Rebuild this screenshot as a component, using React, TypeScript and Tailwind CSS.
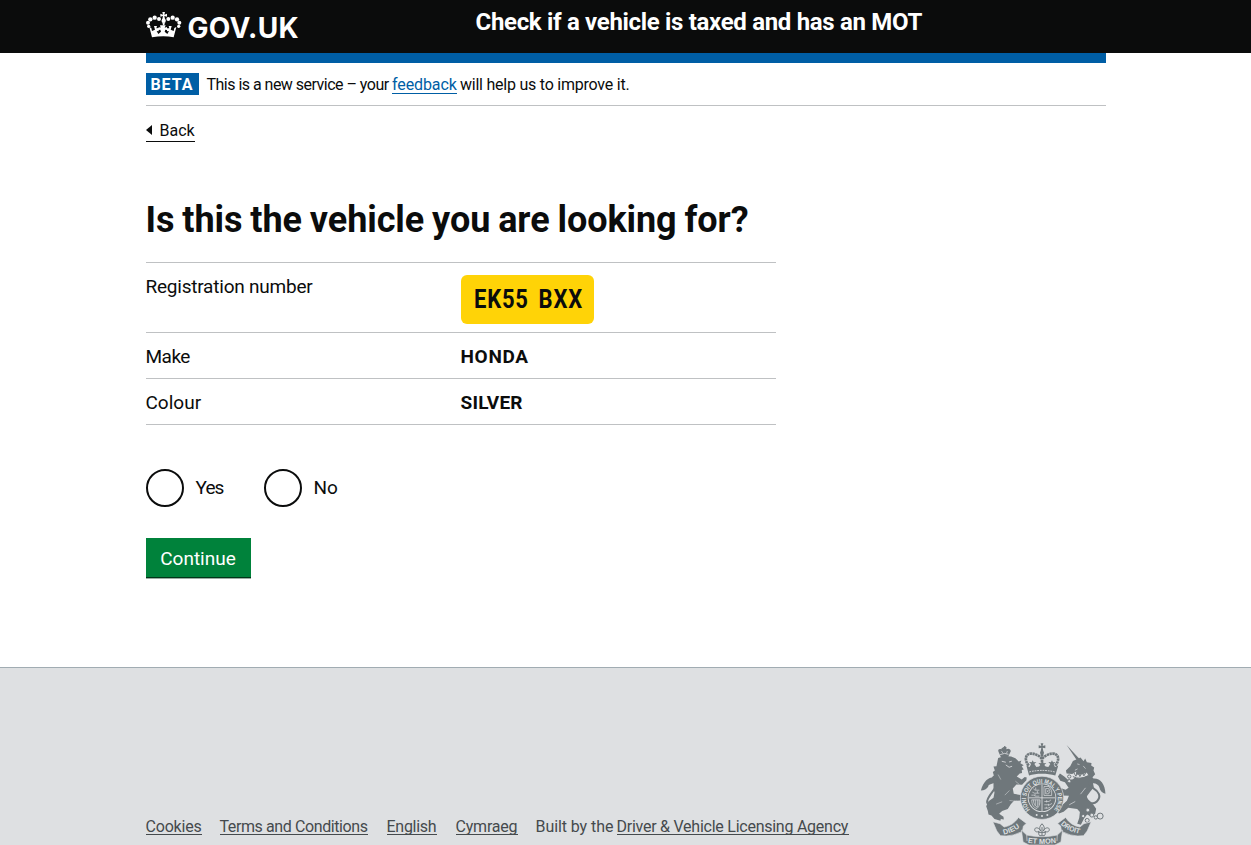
import type { ReactNode } from "react";

function Crown() {
  return (
    <svg viewBox="0 0 126 102" className="h-[34px] w-[42px] shrink-0 fill-white" aria-hidden="true">
      <path d="M55 12h8l-2 8 8-3v9l-8-2 3 14h-10l3-14-8 2v-9l8 3z" />
      <circle cx="59" cy="38" r="6.5" />
      <circle cx="45" cy="33" r="6" />
      <circle cx="73" cy="33" r="6" />
      <circle cx="32" cy="29" r="6.5" />
      <circle cx="86" cy="29" r="6.5" />
      <circle cx="19" cy="34" r="6.5" />
      <circle cx="99" cy="34" r="6.5" />
      <circle cx="12" cy="44" r="6" />
      <circle cx="106" cy="44" r="6" />
      <circle cx="14" cy="55" r="5" />
      <circle cx="104" cy="55" r="5" />
      <path d="M16 57l6 3 2 9 9-4-3-11h9l-2 7 7-1v10l-6-1 5 9 8-7-2-6-5 1v-9l6 2-2-7h17l-3 7 7-2v9l-5-1-2 6 8 7 5-9-6 1V60l7 1-2-7h9l-3 11 9 4 2-9 6-3-8 31Q59 81 24 88z" />
      <path d="M55 43h8l-2 9h-4z" />
    </svg>
  );
}

function Lion() {
  return (
    <g>
      <path d="M85 49c-3-7 3-10 9-7-1-5 5-6 7-3 2-4 9-2 8 3 6-4 13 0 13 6l-8 17H92z" />
      <path d="M104 32v11M99 37h10" className="fill-none stroke-[#6f777b]" strokeWidth="4" />
      <path d="M90 58q14-7 25-1" className="fill-none stroke-[#dee0e2]" strokeWidth="2.5" />
      <path d="M94 47l4 6m14-6l-3 7" className="stroke-[#dee0e2]" strokeWidth="2" />
      <path d="M84 68l20-6 19 2 13 5 10 10 8-3-3 8 10 6-6 3 6 10-6 1 1 9-7 2-9 9 15 9 9-8 6 2-1 8-13 14-17-1-11 12 3 16 24 4 8-3 5 7-3 10-13 2-20 1-10 10-9 15-17 6-9 8 13 9 1 8-9-1-1 5-18-5-9-11-9-3-2-10-5-15 7-15 15-10 3-16-3-13 0-18-6-5 6-4-5-6 6-5-3-11 6-4-4-12 9-1z" />
      <path d="M94 173C77 197 55 216 51 203c-5-18 37-50 33-66-3-14-23-6-29 6" className="fill-none stroke-[#6f777b]" strokeWidth="6" />
      <path d="M82 130c-14-10-40-2-50 36 11 0 17-4 22-11 0-11 15-7 28-17z" />
      <path d="M95 78l12 3m10-1l8-2M107 89l10 7 9-3" className="fill-none stroke-[#dee0e2]" strokeWidth="2.5" />
      <path d="M84 118l8 15m44 5l12 10M78 207l18-7M104 180l14-14M118 196l16 2" className="fill-none stroke-[#dee0e2]" strokeWidth="1.5" />
    </g>
  );
}

function Unicorn() {
  return (
    <g>
      <path d="M290 29l48 52-9 6z" />
      <path d="M332 67l9 11 5-8 5 11 14 2-1 8 9 6-2 9 5 11-8 9 5 8-4 8 3 14-11 14-10 13 3 14 16 11 9 13-3 15-13 8-11-6-8 9-6 12-5 10-11-3 6-17 2-18-8-9-27-4-14 12-14 5-7-10 13-12 18-16 6-15-20-1-16-13-2-13 15 4 13 5 9-6-11-17-14-4-7-13 6-9 13 9 12 10 14-2 8-7 2-16-12 7-17-1-2-9 13-13 8-16z" />
      <path d="M344 181c7 16 23 32 37 18 16-16 4-31-12-41-15-9-12-24 3-24" className="fill-none stroke-[#6f777b]" strokeWidth="6" />
      <path d="M366 131c22-5 40 13 41 45-9-2-16-8-18-18-3-12-15-16-25-13z" />
      <path d="M309 119q19 11 44-3" className="fill-none stroke-[#dee0e2]" strokeWidth="10" />
      <path d="M309 124q21 11 45-2M311 111l7 12 6-12 6 13 7-14 5 12 8-13" className="fill-none stroke-[#6f777b]" strokeWidth="3" />
      <g className="fill-[#dee0e2] stroke-[#6f777b]" strokeWidth="3">
        <circle cx="298" cy="124" r="5" />
        <circle cx="298" cy="138" r="5" />
        <circle cx="354" cy="225" r="6" />
        <circle cx="340" cy="243" r="5" />
        <circle cx="352" cy="256" r="6" />
        <circle cx="366" cy="240" r="6" />
        <circle cx="378" cy="247" r="5" />
        <circle cx="391" cy="243" r="9" />
      </g>
      <path d="M322 86l7 2M315 105l8-4M340 92l7 8M347 158l-15 19M316 199l-18 10" className="fill-none stroke-[#dee0e2]" strokeWidth="2" />
    </g>
  );
}

function RoyalCrown() {
  return (
    <g>
      <path d="M212 24h8l-2 8 8-2v9l-8-2 2 11h-8l2-11-8 2v-9l8 2z" />
      <circle cx="216" cy="52" r="6" />
      <path d="M176 91c-15-18-9-37 8-36 13 0 25 8 32 15 7-7 19-15 32-15 17-1 23 18 8 36" className="fill-none stroke-[#6f777b]" strokeWidth="8" strokeDasharray="7 1.5" />
      <path d="M216 56v35" className="stroke-[#6f777b]" strokeWidth="8" strokeDasharray="7 1.5" />
      <path d="M169 91l10 4 4-9-6-6 8 1 3-6 3 6 8-1-6 6 6 9 8-1 4-5-6-6 8 1 4-7 4 7 8-1-6 6 4 5 8 1 6-9-6-6 8 1 3-6 3 6 8-1-6 6 4 9 10-4-9 30c-24-7-58-7-79 0z" />
      <path d="M178 110q38-9 76 0" className="fill-none stroke-[#dee0e2]" strokeWidth="3" strokeDasharray="5 3" />
    </g>
  );
}

function Garter() {
  return (
    <g>
      <circle cx="216" cy="188" r="65" className="stroke-[#dee0e2]" strokeWidth="2" />
      <circle cx="216" cy="188" r="43" className="fill-[#dee0e2]" />
      <circle cx="216" cy="188" r="40.5" />
      <path d="M216 148v80M176 188h80" className="stroke-[#dee0e2]" strokeWidth="2.5" />
      <g className="fill-none stroke-[#dee0e2]" strokeWidth="2">
        <path d="M190 161l5 4h13M187 171l6 3h15M184 180h7l5 3h12M197 157v7m5 3v7m-7 2v6" />
        <path d="M243 194l-6 5h-14M246 205l-7 4h-16M241 216l-7 3h-11M230 195v7m6 4v7m-7 2v5" />
        <path d="M222 154h15l8 13v14h-23z M227 160h9l4 8-4 8h-9z M230 165l6 6m0-6l-6 6" />
        <path d="M185 194c0 17 8 25 16 26 8-7 9-15 9-26zM190 194c0 12 5 18 11 22M196 194v17m6-17v22m5-21v15" />
      </g>
      <path id="garter-motto" d="M180 224A48 48 0 1 1 252 224" fill="none" />
      <text className="fill-[#dee0e2] font-['Liberation_Sans'] text-[19px] font-bold">
        <textPath href="#garter-motto" textLength="220" lengthAdjust="spacingAndGlyphs">HONI SOIT QUI MAL Y PENSE</textPath>
      </text>
      <g className="fill-[#dee0e2]">
        <circle cx="200" cy="240" r="3" />
        <circle cx="216" cy="243" r="3" />
        <circle cx="232" cy="240" r="3" />
      </g>
    </g>
  );
}

function Motto() {
  return (
    <g>
      <path d="M68 260l22 6 12 10q28-5 43-29l24 18-9 8-3 16q-27 14-49 14l-17-1-11-14z" className="stroke-[#dee0e2]" strokeWidth="2" />
      <path d="M364 260l-22 6-12 10q-28-5-43-29l-24 18 9 8 3 16q27 14 49 14l17-1 11-14z" className="stroke-[#dee0e2]" strokeWidth="2" />
      <path d="M154 285l16 15q46 10 92 0l16-15-5 36-18 9h-78l-18-9z" className="stroke-[#dee0e2]" strokeWidth="2" />
      <path d="M170 300l1 18m91-18l-1 18" className="stroke-[#dee0e2]" strokeWidth="2" />
      <path id="left-motto" d="M101 299q29-6 55-27" fill="none" />
      <path id="base-motto" d="M173 323q43 7 88 0" fill="none" />
      <path id="right-motto" d="M272 268q24 23 63 29" fill="none" />
      <g className="fill-[#dee0e2] font-['Liberation_Sans'] text-[22px] font-bold">
        <text><textPath href="#left-motto" textLength="54">DIEU</textPath></text>
        <text><textPath href="#base-motto" textLength="86">ET MON</textPath></text>
        <text><textPath href="#right-motto" textLength="64" lengthAdjust="spacingAndGlyphs">DROIT</textPath></text>
      </g>
      <path d="M216 266c-10 11-7 17-4 22-4-11-18-13-18-4 0 6 8 9 13 4-2 6-1 11 2 14h14c3-3 4-8 2-14 5 5 13 2 13-4 0-9-14-7-18 4 3-5 6-11-4-22z" className="fill-[#dee0e2] stroke-[#6f777b]" strokeWidth="3" />
      <path d="M205 292h22M216 276v24" className="stroke-[#6f777b]" strokeWidth="3" />
    </g>
  );
}

function Crest() {
  return (
    <svg viewBox="30 20 378 310" className="h-[103px] w-[126px] shrink-0 fill-[#6f777b]" role="img" aria-label="Royal coat of arms">
      <Lion />
      <Unicorn />
      <RoyalCrown />
      <Garter />
      <Motto />
    </svg>
  );
}

function SummaryRow({ label, children }: { label: ReactNode; children: ReactNode }) {
  return (
    <div className="flex h-[46px] border-b border-[#bfc1c3] pt-[10px] text-[19px] leading-[28px]">
      <dt className="w-[315px]">{label}</dt>
      <dd className="font-bold">{children}</dd>
    </div>
  );
}

const footerLink = "border-b border-[#454a4d]";

export default function App() {
  return (
    <div className="flex h-[845px] w-full flex-col overflow-hidden bg-white font-[Roboto,sans-serif] text-[#0b0c0c]">
      <header className="h-[53px] bg-[#0b0c0c] text-white">
        <div className="mx-auto flex w-[960px] items-start">
          <a className="flex w-[330px] shrink-0 pt-2" href="#">
            <span className="-ml-[2px] flex"><Crown /></span>
            <span className="ml-[2px] pt-1 font-[Inter,sans-serif] text-[28px] leading-[32px] font-bold tracking-[0.3px]">GOV.UK</span>
          </a>
          <span className="pt-[6px] text-[24px] leading-[32px] font-bold tracking-[-0.32px] whitespace-nowrap">
            Check if a vehicle is taxed and has an MOT
          </span>
        </div>
      </header>

      <main className="mx-auto h-[614px] w-[960px] shrink-0">
        <div className="h-[10px] bg-[#005ea5]" />
        <div className="flex h-[43px] items-start border-b border-[#bfc1c3] pt-[10px] text-[16px] leading-[22px] whitespace-nowrap">
          <strong className="mr-2 flex h-[22px] w-[53px] items-center justify-center bg-[#005ea5] pt-px text-[16px] tracking-[1px] text-white">BETA</strong>
          <span className="w-[185.5px] pt-px tracking-[-0.52px]">This is a new service – your</span>
          <a href="#" className="mt-px h-[20px] w-[65px] border-b border-[#005ea5] tracking-[-0.1px] text-[#005ea5]">feedback</a>
          <span className="ml-[3px] pt-px tracking-[-0.23px]">will help us to improve it.</span>
        </div>

        <a href="#" className="mt-[14px] flex h-[22px] w-[49px] items-center border-b border-[#0b0c0c] text-[16px] leading-[22px]">
          <svg viewBox="0 0 6 10" className="mr-2 mb-[2px] h-[10px] w-[6px] shrink-0 fill-[#0b0c0c]"><path d="M0 5L6 0v10z" /></svg>
          Back
        </a>

        <h1 className="mt-[58px] text-[36px] leading-[40px] font-bold tracking-[-0.08px] [word-spacing:-0.9px]">
          Is this the vehicle you are looking for?
        </h1>

        <dl className="mt-[22px] w-[630px] border-t border-[#bfc1c3]">
          <div className="flex h-[70px] border-b border-[#bfc1c3] text-[19px] leading-[28px]">
            <dt className="w-[315px] pt-[10px] tracking-[-0.22px]">Registration number</dt>
            <dd className="mt-3 flex h-[49px] w-[133px] items-center rounded-[6px] bg-[#ffd307] pl-[13px] text-[25px] font-bold whitespace-nowrap">
              <span className="origin-left scale-x-[0.88] tracking-[0.9px] [word-spacing:4px]">EK55 BXX</span>
            </dd>
          </div>
          <SummaryRow label={<span className="tracking-[-0.5px]">Make</span>}>
            <span className="tracking-[0.7px]">HONDA</span>
          </SummaryRow>
          <SummaryRow label="Colour">
            <span className="tracking-[0.2px]">SILVER</span>
          </SummaryRow>
        </dl>

        <div className="mt-[44px] flex items-center text-[19px]">
          <label className="flex w-[118px] items-center gap-3">
            <span className="size-[38px] rounded-full border-2 border-[#0b0c0c]" />
            <span className="tracking-[-0.9px]">Yes</span>
          </label>
          <label className="flex items-center gap-3">
            <span className="size-[38px] rounded-full border-2 border-[#0b0c0c]" />
            No
          </label>
        </div>

        <button className="mt-[31px] flex h-[39px] w-[105px] items-center justify-center bg-[#00823b] pt-[3px] text-[19px] leading-[28px] text-white shadow-[0_1.4px_0_#003618]">
          Continue
        </button>
      </main>

      <footer className="h-[178px] shrink-0 border-t border-[#a1acb2] bg-[#dee0e2] text-[#454a4d]">
        <div className="mx-auto flex h-full w-[960px] items-end">
          <div className="flex items-end pb-[10px] text-[16px] leading-[14px] whitespace-nowrap">
            <a href="#" className={`${footerLink} mr-[18px] w-[56px] tracking-[-0.2px]`}>Cookies</a>
            <a href="#" className={`${footerLink} mr-[19px] w-[148px] tracking-[-0.4px]`}>Terms and Conditions</a>
            <a href="#" className={`${footerLink} mr-[19px] w-[50px] tracking-[-0.27px]`}>English</a>
            <a href="#" className={`${footerLink} mr-[18px] w-[62px] tracking-[-0.2px]`}>Cymraeg</a>
            <span className="w-[81px] border-b border-transparent tracking-[-0.08px]">Built by the</span>
            <a href="#" className={`${footerLink} w-[232px] tracking-[-0.25px]`}>Driver &amp; Vehicle Licensing Agency</a>
          </div>
          <div className="ml-auto"><Crest /></div>
        </div>
      </footer>
    </div>
  );
}
